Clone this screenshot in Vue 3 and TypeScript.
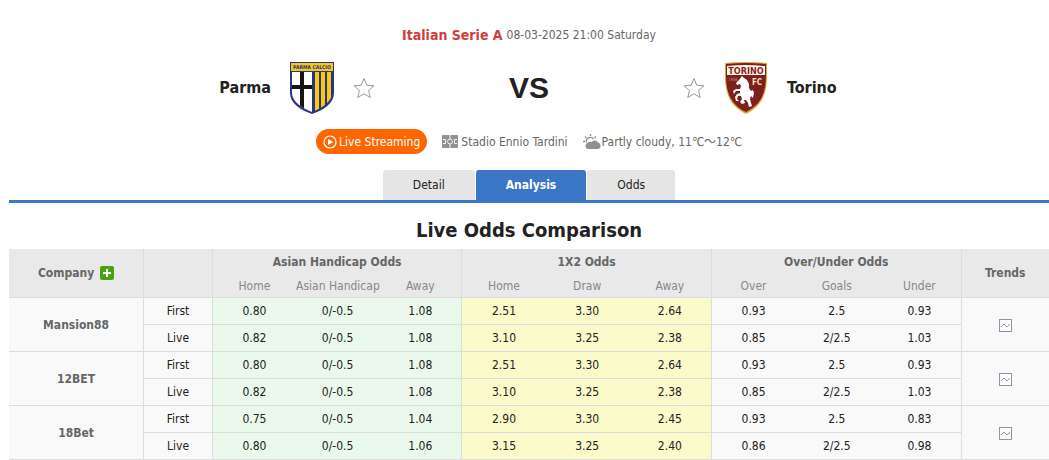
<script setup lang="ts">
import { ref } from 'vue'

type Line = { type: string; values: string[] }
type Company = { name: string; lines: Line[] }

const tabs = ['Detail', 'Analysis', 'Odds']
const active = ref('Analysis')
const favourites = ref({ home: false, away: false })

const groups = [
  { title: 'Asian Handicap Odds', columns: ['Home', 'Asian Handicap', 'Away'] },
  { title: '1X2 Odds', columns: ['Home', 'Draw', 'Away'] },
  { title: 'Over/Under Odds', columns: ['Over', 'Goals', 'Under'] },
]
const tints = ['handicap', 'result', 'total']

const companies: Company[] = [
  {
    name: 'Mansion88',
    lines: [
      { type: 'First', values: ['0.80', '0/-0.5', '1.08', '2.51', '3.30', '2.64', '0.93', '2.5', '0.93'] },
      { type: 'Live', values: ['0.82', '0/-0.5', '1.08', '3.10', '3.25', '2.38', '0.85', '2/2.5', '1.03'] },
    ],
  },
  {
    name: '12BET',
    lines: [
      { type: 'First', values: ['0.80', '0/-0.5', '1.08', '2.51', '3.30', '2.64', '0.93', '2.5', '0.93'] },
      { type: 'Live', values: ['0.82', '0/-0.5', '1.08', '3.10', '3.25', '2.38', '0.85', '2/2.5', '1.03'] },
    ],
  },
  {
    name: '18Bet',
    lines: [
      { type: 'First', values: ['0.75', '0/-0.5', '1.04', '2.90', '3.30', '2.45', '0.93', '2.5', '0.83'] },
      { type: 'Live', values: ['0.80', '0/-0.5', '1.06', '3.15', '3.25', '2.40', '0.86', '2/2.5', '0.98'] },
    ],
  },
]

const cellClass = (i: number) => [tints[Math.floor(i / 3)], { edge: i % 3 === 2 }]
</script>

<template>
  <main class="page">
    <header class="match">
      <p class="league">
        <a href="#league">Italian Serie A</a>
        <span>08-03-2025 21:00 Saturday</span>
      </p>

      <div class="teams">
        <div class="team home">
          <a class="name" href="#parma">Parma</a>
          <svg class="crest" viewBox="0 0 46 54" aria-label="Parma crest">
            <defs>
              <clipPath id="parma-body">
                <path d="M3 11H43V32C43 40 34 47 23 51C12 47 3 40 3 32Z" />
              </clipPath>
            </defs>
            <path d="M1 1H45V32C45 42 35 49 23 53C11 49 1 42 1 32Z" fill="#27348b" />
            <rect x="2" y="2" width="42" height="8" fill="#f6c815" />
            <g clip-path="url(#parma-body)">
              <rect x="3" y="11" width="20" height="42" fill="#fff" />
              <rect x="11" y="11" width="4" height="42" fill="#151515" />
              <rect x="3" y="24" width="20" height="4" fill="#151515" />
              <rect x="23" y="11" width="20" height="42" fill="#27348b" />
              <rect x="26" y="11" width="4" height="42" fill="#fbc90d" />
              <rect x="32" y="11" width="4" height="42" fill="#fbc90d" />
              <rect x="38" y="11" width="4" height="42" fill="#fbc90d" />
            </g>
            <text x="23" y="8" text-anchor="middle" font-size="5" font-weight="700" fill="#27348b">PARMA CALCIO</text>
          </svg>
          <button class="star" type="button" aria-label="Follow Parma" :aria-pressed="favourites.home" @click="favourites.home = !favourites.home">
            <svg viewBox="0 0 22 22"><path d="M11 1.5L13.8 8.2L21 8.8L15.5 13.5L17.3 20.5L11 16.8L4.7 20.5L6.5 13.5L1 8.8L8.2 8.2Z" /></svg>
          </button>
        </div>
        <strong class="versus">VS</strong>
        <div class="team away">
          <button class="star" type="button" aria-label="Follow Torino" :aria-pressed="favourites.away" @click="favourites.away = !favourites.away">
            <svg viewBox="0 0 22 22"><path d="M11 1.5L13.8 8.2L21 8.8L15.5 13.5L17.3 20.5L11 16.8L4.7 20.5L6.5 13.5L1 8.8L8.2 8.2Z" /></svg>
          </button>
          <svg class="crest" viewBox="0 0 46 54" aria-label="Torino crest">
            <path d="M2 2Q23 0 44 2V14C44 33 39 45 23 53C7 45 2 33 2 14Z" fill="#e0a33a" />
            <path d="M3 3Q23 1 43 3V14C43 32 38 44 23 51C8 44 3 32 3 14Z" fill="#7d1f1c" />
            <path d="M4 5Q23 3 42 5V14H4Z" fill="#fff6ea" />
            <text x="23" y="13" text-anchor="middle" font-size="9" font-weight="700" fill="#8a1f1b">TORINO</text>
            <text x="34" y="24" text-anchor="middle" font-size="8" font-weight="700" fill="#f8dfae">FC</text>
            <text x="10" y="20" text-anchor="middle" font-size="4" fill="#c99a86">1906</text>
            <path d="M19 15L21 17L24 19L26 23L26 27L28 30L30 29L31 32L30 37L28 35L27 38L28 42L29 45L26 46L25 42L23 39L21 39L22 42L19 43L17 41L19 38L18 35L15 35L14 38L16 40L13 40L12 36L14 33L17 32L17 30L13 30L11 33L10 30L13 28L17 28L18 25L17 23L14 24L13 22L16 19Z" fill="#fff" />
          </svg>
          <a class="name" href="#torino">Torino</a>
        </div>
      </div>

      <div class="facts">
        <button class="stream" type="button">
          <svg viewBox="0 0 14 14"><circle cx="7" cy="7" r="6" fill="none" stroke="#fff" stroke-width="1.2" /><path d="M5 4L10.500 7L5 10Z" fill="#fff" /></svg>
          Live Streaming
        </button>
        <span class="fact">
          <svg class="pitch" viewBox="0 0 16 13">
            <rect width="16" height="13" rx="1" fill="#929292" />
            <g fill="none" stroke="#f4f4f4"><path d="M8 0V4M8 9V13" /><path d="M1 4.500H3.500V8.500H1M15 4.500H12.500V8.500H15" /><circle cx="8" cy="6.500" r="2.500" /></g>
          </svg>
          Stadio Ennio Tardini
        </span>
        <span class="fact weather">
          <svg class="sky" viewBox="0 0 18 16">
            <path d="M3.500 8.500A4 4 0 0 1 10.500 5M7.500 0V2M2 2.500L3.500 4M0 7.500H2M13 2.500L11.500 4" fill="none" stroke="#909090" stroke-width="1.400" />
            <path d="M5 15A3.200 3.200 0 0 1 4.800 8.800A4 4 0 0 1 8.500 8A3.800 3.800 0 0 1 15 8.500A3.300 3.300 0 0 1 14.500 15Z" fill="#909090" />
          </svg>
          Partly cloudy, 11℃～12℃
        </span>
      </div>
    </header>

    <nav class="tabs">
      <button v-for="tab in tabs" :key="tab" type="button" :class="['tab', { active: tab === active }]" @click="active = tab">{{ tab }}</button>
    </nav>

    <section>
      <h2>Live Odds Comparison</h2>
      <table>
        <colgroup>
          <col class="c-company" />
          <col class="c-type" />
          <col v-for="n in 9" :key="n" class="c-odds" />
          <col class="c-trend" />
        </colgroup>
        <thead>
          <tr class="titles">
            <th rowspan="2" class="edge base">
              <span class="company">Company
                <button class="add" type="button" aria-label="Add company">
                  <svg viewBox="0 0 14 14"><path d="M7 3V11M3 7H11" stroke="#fff" stroke-width="2" /></svg>
                </button>
              </span>
            </th>
            <th rowspan="2" class="edge base"></th>
            <th v-for="group in groups" :key="group.title" colspan="3" class="edge">{{ group.title }}</th>
            <th rowspan="2" class="base">Trends</th>
          </tr>
          <tr class="subtitles">
            <template v-for="group in groups" :key="group.title">
              <th v-for="(column, i) in group.columns" :key="column" :class="['base', { edge: i === 2 }]">{{ column }}</th>
            </template>
          </tr>
        </thead>
        <tbody v-for="company in companies" :key="company.name">
          <tr v-for="(line, row) in company.lines" :key="line.type">
            <th v-if="row === 0" rowspan="2" class="edge">{{ company.name }}</th>
            <td class="edge">{{ line.type }}</td>
            <td v-for="(value, i) in line.values" :key="i" :class="cellClass(i)">{{ value }}</td>
            <td v-if="row === 0" rowspan="2">
              <a class="trend" href="#trends" :aria-label="`${company.name} trends`">
                <svg viewBox="0 0 13 13"><rect x=".5" y=".5" width="12" height="12" fill="#fff" stroke="#8d97a3" /><path d="M2 8L5 5L8 8L11 5" fill="none" stroke="#8d97a3" /></svg>
              </a>
            </td>
          </tr>
        </tbody>
      </table>
    </section>
  </main>
</template>

<style>
body {
  background: #fff;
}
</style>

<style scoped>
.page {
  padding-left: 9px;
  color: #222;
  font-family: Tahoma, "DejaVu Sans Condensed", "Noto Sans", "Noto Sans CJK SC", sans-serif;
  font-size: 12px;
  line-height: 16px;
}
button {
  padding: 0;
  border: 0;
  background: none;
  color: inherit;
  font: inherit;
  cursor: pointer;
}
a {
  color: inherit;
  text-decoration: none;
}
svg {
  display: block;
}
.match {
  padding-top: 25px;
}
.league {
  display: flex;
  justify-content: center;
  align-items: center;
  gap: 4px;
  margin: 0;
  line-height: 20px;
  color: #666;
}
.league a {
  color: #d43c3c;
  font-size: 14px;
  font-weight: 700;
}
.teams {
  display: grid;
  grid-template-columns: 1fr 308px 1fr;
  align-items: center;
  margin-top: 16px;
}
.team {
  display: flex;
  align-items: center;
  gap: 18px;
}
.home {
  justify-content: flex-end;
}
.name {
  font-size: 16px;
  font-weight: 700;
  line-height: 24px;
}
.crest {
  width: 46px;
  height: 54px;
}
.star {
  width: 22px;
  height: 22px;
}
.star path {
  fill: #fff;
  stroke: #999;
}
.star[aria-pressed="true"] path {
  fill: #f6c815;
}
.versus {
  text-align: center;
  font-family: "Liberation Sans", Arial, sans-serif;
  font-size: 30px;
  line-height: 36px;
}
.facts {
  display: flex;
  justify-content: center;
  align-items: center;
  gap: 15px;
  margin-top: 14px;
  color: #666;
}
.stream {
  display: flex;
  align-items: center;
  gap: 2px;
  height: 25px;
  padding: 0 7px;
  border-radius: 13px;
  background: #f60;
  color: #fff;
}
.stream svg {
  width: 14px;
  height: 14px;
}
.fact {
  display: flex;
  align-items: center;
  gap: 3px;
}
.weather {
  gap: 1px;
}
.pitch {
  width: 16px;
  height: 13px;
}
.sky {
  width: 18px;
  height: 16px;
}
.tabs {
  display: flex;
  justify-content: center;
  gap: 1px;
  margin-top: 16px;
  border-bottom: 3px solid #3c76c6;
}
.tab {
  height: 30px;
  padding: 0 30px;
  border-radius: 3px 3px 0 0;
  background: #e5e5e5;
}
.tab.active {
  background: #3c76c6;
  color: #fff;
  font-weight: 700;
}
h2 {
  margin: 0;
  padding: 15px 0 7px;
  text-align: center;
  font-size: 20px;
  line-height: 24px;
}
table {
  width: 100%;
  table-layout: fixed;
  border-collapse: separate;
  border-spacing: 0;
  text-align: center;
  white-space: nowrap;
}
.c-company {
  width: 13%;
}
.c-type {
  width: 6.6%;
}
.c-odds {
  width: 8%;
}
.c-trend {
  width: 8.4%;
}
th,
td {
  padding: 0;
}
thead th {
  background: #e9e9e9;
  color: #666;
}
.titles th {
  height: 25px;
}
.subtitles th {
  height: 23px;
  color: #888;
  font-weight: 400;
}
.base,
tbody th,
tbody td {
  border-bottom: 1px solid #ddd;
}
.edge {
  border-right: 1px solid #ddd;
}
tbody th,
tbody td {
  height: 26px;
  background: #f9f9f9;
}
tbody th {
  color: #666;
}
tbody .handicap {
  background: #ebf8ec;
}
tbody .result {
  background: #fbfacb;
}
.company {
  display: flex;
  justify-content: center;
  align-items: center;
  gap: 6px;
}
.add {
  width: 14px;
  height: 14px;
  border-radius: 2px;
  background: #47a114;
}
.trend {
  display: inline-block;
  vertical-align: middle;
}
.trend svg {
  width: 13px;
  height: 13px;
}
</style>
